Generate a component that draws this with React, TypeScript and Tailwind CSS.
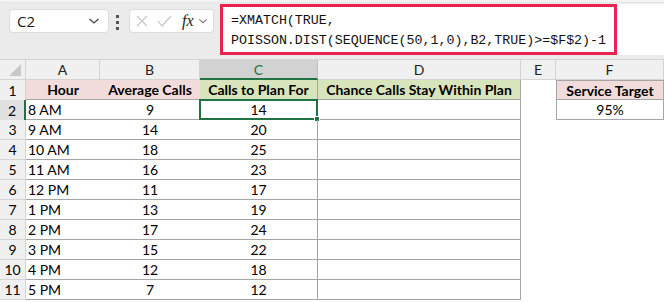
import React from 'react'

const rows: [string, string, string][] = [
  ['8 AM', '9', '14'],
  ['9 AM', '14', '20'],
  ['10 AM', '18', '25'],
  ['11 AM', '16', '23'],
  ['12 PM', '11', '17'],
  ['1 PM', '13', '19'],
  ['2 PM', '17', '24'],
  ['3 PM', '15', '22'],
  ['4 PM', '12', '18'],
  ['5 PM', '7', '12'],
]

const cols = ['A', 'B', 'C', 'D', 'E', 'F']

function Chevron({ className }: { className?: string }) {
  return (
    <svg width="12" height="8" viewBox="0 0 12 8" fill="none" stroke="currentColor" strokeWidth="1.3" className={className}>
      <path d="M1.5 2l4.5 4 4.5-4" />
    </svg>
  )
}

function FormulaBar() {
  return (
    <div className="h-[60px] bg-[#ebebeb] border-b border-[#d4d4d4] relative">
      <div className="h-[3px] bg-[#f3f3f3] border-b border-dotted border-[#d8d8d8]" />
      <div className="flex items-start">
        <div className="ml-[9px] mt-[6px] w-[100px] h-[24px] bg-white rounded-[4px] border border-[#dcdcdc] flex items-center justify-between pl-[7px] pr-[8px]">
          <span className="text-[15px] text-[#1a1a1a]" style={{ fontFamily: '"Open Sans", sans-serif' }}>C2</span>
          <Chevron className="text-[#444]" />
        </div>
        <div className="ml-[7px] mt-[12px] flex flex-col gap-[3px]">
          <div className="w-[3px] h-[3px] bg-[#555]" />
          <div className="w-[3px] h-[3px] bg-[#555]" />
          <div className="w-[3px] h-[3px] bg-[#555]" />
        </div>
        <div className="ml-[10px] mt-[6px] w-[85px] h-[24px] bg-white rounded-[4px] border border-[#dcdcdc] flex items-center pl-[6px]">
          <svg width="12" height="12" viewBox="0 0 12 12" stroke="#c6c6c6" strokeWidth="1.2">
            <path d="M1 1l10 10M11 1L1 11" />
          </svg>
          <svg width="15" height="12" viewBox="0 0 15 12" fill="none" stroke="#c6c6c6" strokeWidth="1.2" className="ml-[9px]">
            <path d="M1 6l4 5L14 1" />
          </svg>
          <span className="ml-[10px] italic text-[16px] text-[#222] leading-none" style={{ fontFamily: '"Liberation Serif", serif' }}>fx</span>
          <Chevron className="ml-[4px] text-[#777] w-[10px]" />
        </div>
        <div className="ml-[6px] mt-[1px] w-[397px] h-[51px] border-[3px] border-[#e8234e] bg-white pl-[8px] pt-[4px] text-[13.3px] leading-[20px] text-[#111]" style={{ fontFamily: '"Liberation Mono", monospace' }}>
          <div>=XMATCH(TRUE,</div>
          <div>POISSON.DIST(SEQUENCE(50,1,0),B2,TRUE)&gt;=$F$2)-1</div>
        </div>
        <div className="flex-1 mt-[1px] h-[51px] bg-white" />
      </div>
    </div>
  )
}

export default function App() {
  const cell = 'h-[20px] flex items-center text-[14px] text-black'
  return (
    <div className="w-[664px] h-[302px] overflow-hidden bg-white" style={{ fontFamily: 'Lato, sans-serif' }}>
      <FormulaBar />
      <div className="grid grid-cols-[26px_74px_100px_118px_203px_35px_108px] grid-rows-[20px]">
        {/* column headers */}
        <div className="h-[20px] bg-[#f0f0f0] border-r border-b border-[#d4d4d4] relative">
          <svg width="12" height="12" viewBox="0 0 12 12" className="absolute right-[4px] bottom-[3px]">
            <path d="M12 0L12 12L0 12Z" fill="#c8c8c8" />
          </svg>
        </div>
        {cols.map((c) => (
          <div
            key={c}
            className={
              c === 'C'
                ? 'h-[20px] bg-[#d2d2d2] border-r border-[#c0c0c0] border-b-2 border-b-[#217346] flex items-center justify-center text-[14px] text-[#217346]'
                : 'h-[20px] bg-[#f0f0f0] border-r border-b border-[#d4d4d4] flex items-center justify-center text-[14px] text-[#222]'
            }
          >
            {c}
          </div>
        ))}

        {/* row 1 */}
        <div className={`${cell} justify-center bg-[#f0f0f0] border-r border-[#d4d4d4] text-[#222]`}>1</div>
        <div className={`${cell} justify-center font-bold bg-[#f2dcdb] border-b border-[#a6a6a6]`}>Hour</div>
        <div className={`${cell} justify-center font-bold bg-[#f2dcdb] border-b border-[#a6a6a6]`}>Average Calls</div>
        <div className={`${cell} justify-center font-bold bg-[#d8e4bc] border-b border-r border-[#a6a6a6]`}>Calls to Plan For</div>
        <div className={`${cell} justify-center font-bold bg-[#d8e4bc] border-b border-r border-[#a6a6a6]`}>Chance Calls Stay Within Plan</div>
        <div className={cell} />
        <div className={`${cell} justify-center font-bold bg-[#f2dcdb] border border-[#a6a6a6]`}>Service Target</div>

        {rows.map(([h, a, p], i) => {
          const n = i + 2
          const sel = n === 2
          return (
            <React.Fragment key={n}>
              <div
                className={
                  sel
                    ? `${cell} justify-center bg-[#e1e1e1] border-r-2 border-[#217346] text-[#217346]`
                    : `${cell} justify-center bg-[#f0f0f0] border-r border-b border-[#d4d4d4] text-[#222]`
                }
              >
                {n}
              </div>
              <div className={`${cell} pl-[2px] border-b border-[#a6a6a6]`}>{h}</div>
              <div className={`${cell} justify-center border-b border-[#a6a6a6]`}>{a}</div>
              <div className={`${cell} justify-center border-b border-r border-[#a6a6a6] relative`}>
                {p}
                {sel && (
                  <div className="absolute left-[-1px] top-[-1px] right-[-1px] bottom-[-1px] border-2 border-[#217346]">
                    <div className="absolute right-[-4px] bottom-[-4px] w-[6px] h-[6px] bg-[#217346] border border-white" />
                  </div>
                )}
              </div>
              <div className={`${cell} border-b border-r border-[#a6a6a6]`} />
              <div className={cell} />
              {n === 2 ? (
                <div className={`${cell} justify-center border-x border-b border-[#a6a6a6]`}>95%</div>
              ) : (
                <div className={cell} />
              )}
            </React.Fragment>
          )
        })}
      </div>
    </div>
  )
}
